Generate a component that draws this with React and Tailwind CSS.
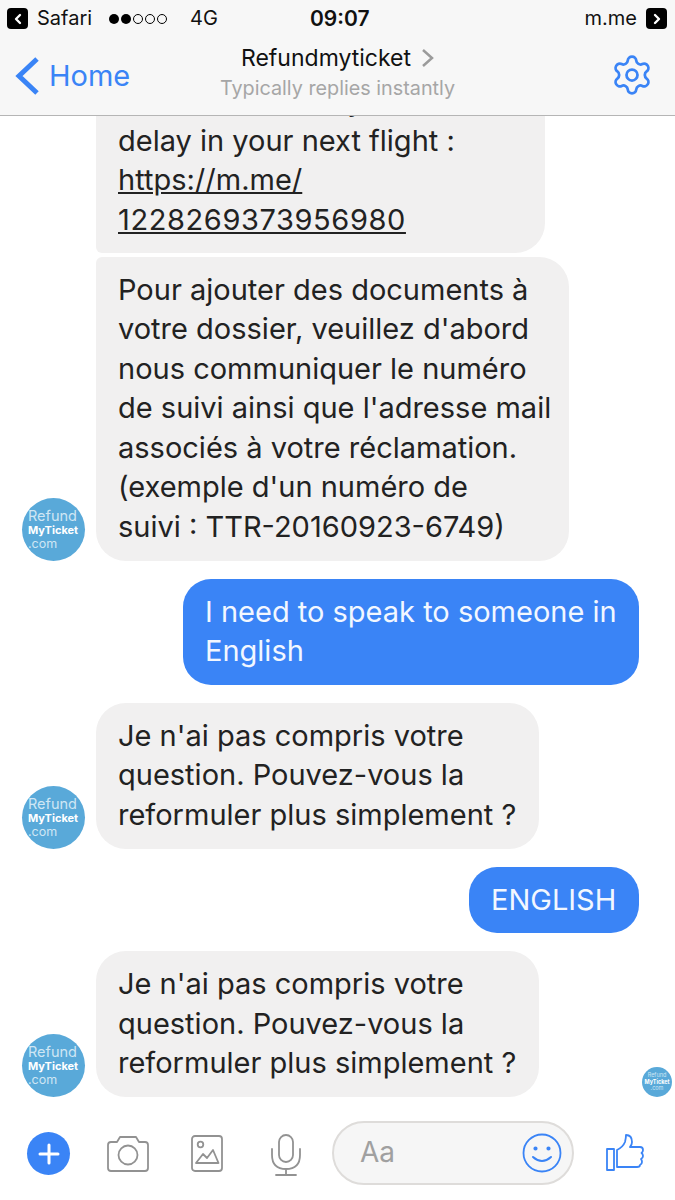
import { ChevronLeft, ChevronRight, Settings } from 'lucide-react'

const font = { fontFamily: 'Inter, "Liberation Sans", sans-serif' }

// ── Round brand avatar next to bot replies ──
function Avatar() {
  return (
    <div className="w-[63px] h-[63px] shrink-0 rounded-full bg-[#59a9d9] flex flex-col justify-center pl-[6px] pt-[1px] text-[#cfe6f4] whitespace-nowrap">
      <div className="text-[14.5px] leading-[14px]">Refund</div>
      <div className="text-[11px] leading-[14px] font-bold text-white">MyTicket</div>
      <div className="text-[12.5px] leading-[14px]">.com</div>
    </div>
  )
}

function Bot({ width, avatar, corners = 'rounded-[30px]', children }) {
  return (
    <div className="flex items-end pl-[22px] gap-[11px]">
      {avatar ? <Avatar /> : <div className="w-[63px] shrink-0" />}
      <div className={`bg-[#f1f0f0] whitespace-nowrap px-[22px] pt-[13px] pb-[14px] ${corners} ${width}`}>
        {children}
      </div>
    </div>
  )
}

function Me({ width, children }) {
  return (
    <div className="flex justify-end pr-[36px]">
      <div className={`bg-[#3a84f6] text-[#f2f7ff] whitespace-nowrap rounded-[28px] px-[22px] pt-[13px] pb-[14px] ${width}`}>
        {children}
      </div>
    </div>
  )
}

function StatusBar() {
  return (
    <div className="h-[36px] flex items-center pl-[7px] pr-[8px] text-[#111] text-[20px] pt-[1px]">
      <div className="w-[21px] h-[21px] rounded-[4px] bg-black flex items-center justify-center">
        <ChevronLeft size={16} strokeWidth={3.5} color="#fff" />
      </div>
      <span className="ml-[9px] w-[72px]">Safari</span>
      <div className="flex gap-[2px] items-center w-[81px]">
        <i className="w-[10px] h-[10px] rounded-full bg-black" />
        <i className="w-[10px] h-[10px] rounded-full bg-black" />
        <i className="w-[10px] h-[10px] rounded-full border border-black" />
        <i className="w-[10px] h-[10px] rounded-full border border-black" />
        <i className="w-[10px] h-[10px] rounded-full border border-black" />
      </div>
      <span className="w-[120px]">4G</span>
      <span className="font-semibold text-[21px]">09:07</span>
      <span className="ml-auto">m.me</span>
      <div className="ml-[9px] w-[21px] h-[21px] rounded-[4px] bg-black flex items-center justify-center">
        <ChevronRight size={16} strokeWidth={3.5} color="#fff" />
      </div>
    </div>
  )
}

function NavBar() {
  return (
    <div className="h-[79px] grid grid-cols-[1fr_auto_1fr] items-start">
      <div className="flex items-center pl-[12px] pt-[20px] text-[#3a84f6]">
        <svg width="30" height="40" viewBox="0 0 30 40" fill="none" stroke="#3a84f6" strokeWidth="5">
          <path d="M25 3 L7 20 L25 37" />
        </svg>
        <span className="ml-[7px] text-[29px] leading-[40px]">Home</span>
      </div>
      <div className="flex flex-col items-center pt-[6px]">
        <div className="flex items-center gap-[10px] text-[23px] leading-[32px] text-[#111]">
          <span>Refundmyticket</span>
          <svg width="13" height="20" viewBox="0 0 13 20" fill="none" stroke="#9b9b9b" strokeWidth="2.5">
            <path d="M2 2 L11 10 L2 18" />
          </svg>
        </div>
        <div className="text-[19.8px] leading-[28px] text-[#a6a6a6]">Typically replies instantly</div>
      </div>
      <div className="flex justify-end pr-[21px] pt-[17px]">
        <Settings size={44} strokeWidth={1.5} color="#3a84f6" />
      </div>
    </div>
  )
}

function Composer() {
  return (
    <div className="h-[95px] flex items-start bg-white pt-[16px]">
      <div className="ml-[27px] mt-[11px] w-[43px] h-[43px] rounded-full bg-[#3a84f6] flex items-center justify-center">
        <svg width="24" height="24" viewBox="0 0 24 24" stroke="#fff" strokeWidth="3" strokeLinecap="round">
          <path d="M12 3 V21 M3 12 H21" />
        </svg>
      </div>
      {/* camera */}
      <svg className="ml-[37px] mt-[14px]" width="42" height="38" viewBox="0 0 42 38" fill="none" stroke="#929292" strokeWidth="1.8" strokeLinejoin="round">
        <path d="M4 7 H10 L13 2 H29 L32 7 H38 Q41 7 41 10 V33 Q41 36 38 36 H4 Q1 36 1 33 V10 Q1 7 4 7 Z" />
        <circle cx="21" cy="20" r="9.5" />
      </svg>
      {/* image */}
      <svg className="ml-[42px] mt-[14px]" width="32" height="37" viewBox="0 0 32 37" fill="none" stroke="#929292" strokeWidth="1.8" strokeLinejoin="round">
        <rect x="1" y="1" width="30" height="35" rx="3" />
        <circle cx="9.5" cy="9.5" r="2.8" />
        <path d="M5 28 L12 19 L16 23 L22 15 L27.5 28 Z" />
      </svg>
      {/* mic */}
      <svg className="ml-[48px] mt-[13px]" width="30" height="42" viewBox="0 0 30 42" fill="none" stroke="#929292" strokeWidth="1.8" strokeLinecap="round">
        <rect x="8" y="1" width="14" height="27" rx="7" />
        <path d="M1 15 V21 Q1 35 15 35 Q29 35 29 21 V15 M15 35 V41 M5 41 H25" />
      </svg>
      <div className="ml-[31px] w-[242px] h-[64px] rounded-full bg-[#f6f6f6] border-2 border-[#dedcda] flex items-center justify-between pl-[26px] pr-[10px]">
        <span className="text-[28px] text-[#a0a0a0]">Aa</span>
        <svg width="40" height="40" viewBox="0 0 40 40" fill="none" stroke="#3a84f6" strokeWidth="1.8" strokeLinecap="round">
          <circle cx="20" cy="20" r="18.5" />
          <circle cx="13.5" cy="15.5" r="1.2" fill="#3a84f6" />
          <circle cx="26.5" cy="15.5" r="1.2" fill="#3a84f6" />
          <path d="M11 24 Q20 32 29 24" strokeWidth="2" />
        </svg>
      </div>
      {/* thumb */}
      <svg className="ml-[32px] mt-[13px]" width="38" height="38" viewBox="0 0 38 38" fill="none" stroke="#3a84f6" strokeWidth="1.8" strokeLinejoin="round">
        <rect x="1" y="15" width="7" height="21" />
        <path d="M11 33 V16 Q17 13 19 8 Q20 4 20 1 Q26 1 26 8 Q26 11 24 13 H34 Q37 13 37 16 Q37 18 35.5 19 Q37 20 37 22 Q37 24 35 25 Q36 26 36 28 Q36 30 34 31 Q34 33 31 33 Z" />
      </svg>
    </div>
  )
}

export default function App() {
  return (
    <div style={font} className="w-[675px] h-[1200px] overflow-hidden flex flex-col bg-white text-[29px] leading-[39.6px] text-[#222]">
      <div className="relative z-10 h-[116px] shrink-0 bg-[#f7f7f7] border-b border-[#b5b5b5]">
        <StatusBar />
        <NavBar />
      </div>

      <div className="relative flex-1 min-h-0 flex flex-col justify-end overflow-hidden pb-[8px]">
        <div className="mb-[4px] shrink-0">
          <Bot width="w-[449px]" corners="rounded-[30px] rounded-bl-[6px]">
            <div className="-mb-[1px]">
              We will check any<br />
              delay in your next flight :<br />
              <span className="underline">https://m.me/</span><br />
              <span className="underline tracking-[0.6px]">1228269373956980</span>
            </div>
          </Bot>
        </div>
        <div className="mb-[18px] shrink-0">
          <Bot width="w-[473px]" corners="rounded-[30px] rounded-tl-[6px]" avatar>
            Pour ajouter des documents à<br />
            votre dossier, veuillez d'abord<br />
            nous communiquer le numéro<br />
            de suivi ainsi que l'adresse mail<br />
            associés à votre réclamation.<br />
            (exemple d'un numéro de<br />
            suivi : TTR-20160923-6749)
          </Bot>
        </div>
        <div className="mb-[18px] shrink-0">
          <Me width="w-[456px]">I need to speak to someone in<br />English</Me>
        </div>
        <div className="mb-[18px] shrink-0">
          <Bot width="w-[443px]" avatar>
            Je n'ai pas compris votre<br />
            question. Pouvez-vous la<br />
            reformuler plus simplement ?
          </Bot>
        </div>
        <div className="mb-[18px] shrink-0">
          <Me width="w-[170px]">ENGLISH</Me>
        </div>
        <div className="shrink-0">
          <Bot width="w-[443px]" avatar>
            Je n'ai pas compris votre<br />
            question. Pouvez-vous la<br />
            reformuler plus simplement ?
          </Bot>
        </div>

        {/* seen marker */}
        <div className="absolute right-[3px] bottom-[8px] w-[30px] h-[30px] rounded-full bg-[#59a9d9] flex flex-col items-center justify-center text-[5.5px] leading-[6.5px] text-white">
          <span className="text-[#cfe6f4]">Refund</span>
          <span className="font-bold">MyTicket</span>
          <span className="text-[#cfe6f4]">.com</span>
        </div>
      </div>

      <Composer />
    </div>
  )
}
